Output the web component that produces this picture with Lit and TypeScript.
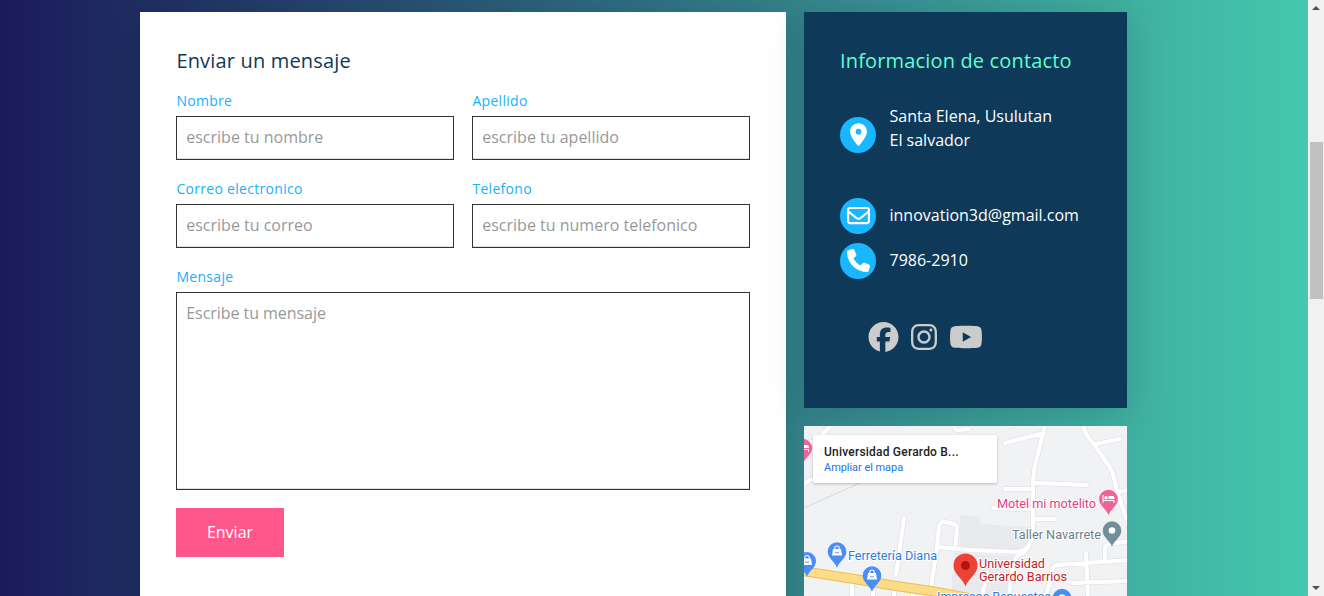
import { LitElement, html, css, svg } from "lit";
import { customElement } from "lit/decorators.js";

const sans = css`"Open Sans", "Noto Sans", sans-serif`;

const FACEBOOK = "M512 256C512 114.600 397.400 0 256 0S0 114.600 0 256C0 376 82.700 476.800 194.200 504.500V334.200H141.400V256h52.800V222.300c0-87.100 39.400-127.500 125-127.500 16.200 0 44.200 3.200 55.700 6.400V172c-6-.6-16.500-1-29.600-1-42 0-58.200 15.900-58.200 57.200V256h83.600l-14.400 78.200H287V510.100C413.800 494.800 512 386.900 512 256z";
const INSTAGRAM = "M224.100 141c-63.600 0-114.900 51.300-114.900 114.900s51.300 114.900 114.900 114.900S339 319.500 339 255.900 287.700 141 224.100 141zm0 189.600c-41.100 0-74.700-33.500-74.700-74.700s33.500-74.700 74.700-74.700 74.700 33.500 74.700 74.700-33.600 74.700-74.700 74.700zm146.400-194.300c0 14.900-12 26.800-26.800 26.800-14.900 0-26.800-12-26.800-26.800s12-26.800 26.800-26.800 26.800 12 26.800 26.800zm76.100 27.200c-1.700-35.900-9.900-67.700-36.200-93.900-26.200-26.200-58-34.400-93.900-36.200-37-2.100-147.900-2.100-184.900 0-35.800 1.700-67.600 9.900-93.900 36.100s-34.400 58-36.200 93.900c-2.100 37-2.100 147.900 0 184.900 1.700 35.900 9.900 67.700 36.200 93.900s58 34.400 93.900 36.200c37 2.100 147.900 2.100 184.900 0 35.900-1.700 67.700-9.900 93.900-36.200 26.200-26.200 34.400-58 36.200-93.900 2.100-37 2.100-147.800 0-184.800zM398.800 388c-7.800 19.600-22.900 34.700-42.600 42.600-29.500 11.700-99.500 9-132.100 9s-102.700 2.600-132.100-9c-19.600-7.800-34.700-22.900-42.600-42.600-11.700-29.500-9-99.500-9-132.100s-2.600-102.700 9-132.100c7.800-19.600 22.900-34.700 42.600-42.600 29.500-11.700 99.500-9 132.100-9s102.700-2.600 132.100 9c19.600 7.800 34.700 22.900 42.600 42.600 11.700 29.500 9 99.500 9 132.100s2.700 102.700-9 132.100z";
const YOUTUBE = "M549.655 124.083c-6.281-23.650-24.787-42.276-48.284-48.597C458.781 64 288 64 288 64S117.220 64 74.629 75.486c-23.497 6.322-42.003 24.947-48.284 48.597-11.412 42.867-11.412 132.305-11.412 132.305s0 89.438 11.412 132.305c6.281 23.650 24.787 41.500 48.284 47.821C117.220 448 288 448 288 448s170.780 0 213.371-11.486c23.497-6.321 42.003-24.171 48.284-47.821 11.412-42.867 11.412-132.305 11.412-132.305s0-89.438-11.412-132.305zm-317.510 213.508V175.185l142.739 81.205-142.739 81.201z";
const PIN = "M215.700 499.200C267 435 384 279.400 384 192C384 86 298 0 192 0S0 86 0 192c0 87.400 117 243 168.300 307.200c12.300 15.300 35.100 15.300 47.400 0zM192 256a64 64 0 1 1 0-128 64 64 0 1 1 0 128z";
const MAIL = "M64 112c-8.800 0-16 7.200-16 16v22.100L220.500 291.700c20.700 17 50.400 17 71.100 0L464 150.100V128c0-8.800-7.200-16-16-16H64zM48 212.200V384c0 8.800 7.200 16 16 16H448c8.800 0 16-7.200 16-16V212.200L322 328.800c-38.400 31.500-93.700 31.500-132 0L48 212.200zM0 128C0 92.700 28.700 64 64 64H448c35.300 0 64 28.700 64 64V384c0 35.300-28.700 64-64 64H64c-35.300 0-64-28.700-64-64V128z";
const PHONE = "M164.900 24.600c-7.700-18.600-28-28.500-47.400-23.200l-88 24C12.100 30.200 0 46 0 64C0 311.400 200.600 512 448 512c18 0 33.800-12.100 38.600-29.500l24-88c5.300-19.400-4.600-39.700-23.200-47.400l-96-40c-16.300-6.800-35.200-2.100-46.300 11.600L304.700 368C234.300 334.700 177.300 277.700 144 207.300L193.300 167c13.700-11.200 18.400-30 11.600-46.300l-40-96z";

@customElement("message-form")
export class MessageForm extends LitElement {
  static styles = css`
    :host { display: block; padding: 36px; font-family: ${sans}; }
    * { box-sizing: border-box; }
    h3 { margin: 0; padding-left: 0.400px; font-size: 20px; line-height: 25px; font-weight: 400; letter-spacing: 0.17px; color: #0e3959; }
    .grid { display: grid; grid-template-columns: 278px 278px; column-gap: 18px; row-gap: 18px; padding-top: 17px; }
    .field { display: flex; flex-direction: column; }
    .wide { grid-column: 1 / 3; }
    label { font-size: 14px; line-height: 19px; letter-spacing: 0.3px; color: #18b0ff; padding: 1px 0 6px 0.400px; }
    input, textarea {
      display: block; width: 100%; border: 1px solid #333; border-radius: 0; outline: 0; resize: none;
      padding: 9px 9px 9px 9.250px; font: 16px/22px ${sans}; color: #333; background: #fff; box-shadow: inset 0 -1px #e0e0e0;
    }
    input { height: 44px; padding-bottom: 11px; }
    textarea { height: 198px; letter-spacing: -0.05px; }
    ::placeholder { color: #999; opacity: 1; }
    button { width: 108px; height: 49px; border: 0; padding: 0 0 2px; background: #ff578b; color: #fff; font: 16px ${sans}; }
  `;
  render() {
    const field = (label: string, hint: string) => html`
      <div class="field"><label>${label}</label><input placeholder=${hint} /></div>`;
    return html`
      <h3>Enviar un mensaje</h3>
      <div class="grid">
        ${field("Nombre", "escribe tu nombre")}
        ${field("Apellido", "escribe tu apellido")}
        ${field("Correo electronico", "escribe tu correo")}
        ${field("Telefono", "escribe tu numero telefonico")}
        <div class="field wide"><label>Mensaje</label><textarea placeholder="Escribe tu mensaje"></textarea></div>
        <div><button>Enviar</button></div>
      </div>`;
  }
}

@customElement("contact-info")
export class ContactInfo extends LitElement {
  static styles = css`
    :host { display: block; box-sizing: border-box; padding: 36px; font-family: ${sans}; color: #fff; }
    h3 { margin: 0; font-size: 20px; line-height: 25px; font-weight: 400; letter-spacing: 0.16px; color: #5fffd0; white-space: nowrap; }
    .row { display: flex; align-items: center; gap: 13.500px; height: 36px; margin-bottom: 9px; font-size: 16px; line-height: 24px; white-space: nowrap; }
    .address { height: 60px; margin: 31px 0 34px; align-items: flex-start; }
    .address .disc { margin-top: 13px; }
    .address .text { padding-top: 0; }
    .disc { width: 36px; height: 36px; flex: none; border-radius: 50%; background: #18b7ff; display: flex; justify-content: center; align-items: center; }
    .disc svg, .social svg { display: block; fill: currentColor; }
    .disc svg { margin-bottom: 2px; }
    .text { padding-bottom: 2px; }
    .social { display: flex; align-items: center; color: #ccc; padding: 34px 0 0 28px; }
    .social svg + svg { margin-left: 12px; }
    .social svg:last-child { margin-left: 13px; }
  `;
  render() {
    return html`
      <h3>Informacion de contacto</h3>
      <div class="row address">
        <span class="disc"><svg width="17" height="23" viewBox="0 0 384 512"><path d=${PIN} /></svg></span>
        <span class="text">Santa Elena, Usulutan<br />El salvador</span>
      </div>
      <div class="row">
        <span class="disc"><svg width="23" height="23" viewBox="0 0 512 512"><path d=${MAIL} /></svg></span>
        <span class="text">innovation3d@gmail.com</span>
      </div>
      <div class="row">
        <span class="disc"><svg width="23" height="23" viewBox="0 0 512 512"><path d=${PHONE} /></svg></span>
        <span class="text">7986-2910</span>
      </div>
      <div class="social">
        <svg width="31" height="30" viewBox="0 0 512 512"><path d=${FACEBOOK} /></svg>
        <svg width="26" height="30" viewBox="0 0 448 512"><path d=${INSTAGRAM} /></svg>
        <svg width="32" height="30" viewBox="14 0 548 512" preserveAspectRatio="none"><path d=${YOUTUBE} /></svg>
      </div>`;
  }
}

@customElement("place-map")
export class PlaceMap extends LitElement {
  static styles = css`
    :host { display: block; position: relative; overflow: hidden; background: #f1f2f4; }
    .canvas { display: block; }
    .canvas text { font-family: Roboto, sans-serif; paint-order: stroke; stroke: #fff; stroke-width: 2px; stroke-linejoin: round; }
    .edge { fill: none; stroke: #e2e4e8; stroke-width: 5.600; stroke-linecap: round; stroke-linejoin: round; }
    .road { fill: none; stroke: #fff; stroke-width: 4; stroke-linecap: round; stroke-linejoin: round; }
    .card {
      position: absolute; left: 9px; top: 9px; width: 184px; height: 48px; box-sizing: border-box; padding: 9px 11px;
      background: #fff; border-radius: 2px; box-shadow: 0 1px 3px rgba(0, 0, 0, 0.25);
      font: 500 12px/16px Roboto, sans-serif; letter-spacing: 0.21px; color: #222; white-space: nowrap;
    }
    .card .link { display: block; font-weight: 400; font-size: 11px; line-height: 15px; letter-spacing: -0.05px; color: #1a73e8; }
  `;
  pin(x: number, y: number, r: number, fill: string, glyph: unknown) {
    const tip = r * 1.75;
    return svg`<g transform="translate(${x} ${y})">
      <path fill=${fill} d="M0 ${tip}C${-r * 0.2} ${r * 1.1} ${-r} ${r * 0.75} ${-r} 0A${r} ${r} 0 0 1 ${r} 0C${r} ${r * 0.75} ${r * 0.2} ${r * 1.1} 0 ${tip}Z" />${glyph}</g>`;
  }
  render() {
    const roads =
      "M-2 21L14 12L28 -1M-2 59L10 52M150 -1Q150 5 156 4L165 3M206 0L213 -3" +
      "M100 92L92 149M127 162L133 121L135 101Q136 95 141 96L150 98Q153 99 153 103L151 122M133 121L165 124L212 126Q222 125 224 120" +
      "M241 -1L233 31Q229 46 229 60V102Q229 112 225 119Q222 126 214 130Q209 134 208 145L205 172" +
      "M240 7L201 17M232 57L283 59M201 63H229M189 82L229 83M251 93H229M178 171L183 146" +
      "M279 -2Q282 11 289 17L305 40Q310 48 312 62L325 101M292 18L316 13M313 66L325 64" +
      "M301 134V122Q301 119 306 118L325 115M325 134L253 139Q248 140 248 147Q248 151 253 152L269 157L325 155M282 127L284 172M248 151L241 172" +
      "M48 156V172M69 166V172M90 163V172M109 166V172";
    const bag = svg`<path fill="#fff" d="M-4 -2.500H4L5 4H-5Z" /><path fill="none" stroke="#fff" stroke-width="1.100" d="M-2.200 -2V-3.500Q-2.200 -5.500 0 -5.500T2.200 -3.500V-2" /><path fill="none" stroke="#4a8df6" stroke-width="0.900" d="M-2 0.500Q0 2.800 2 0.500" />`;
    const bed = svg`<path fill="#fff" d="M-6 -4H-5V1H6V4H5V2H-5V4H-6ZM0 -3H4Q6 -3 6 0H0Z" /><circle cx="-2.500" cy="-1.200" r="1.700" fill="#fff" />`;
    return html`
      <svg class="canvas" width="323" height="170" viewBox="0 0 323 170">
        <path fill="#e8eaed" d="M156 89L176 91V98L229 101V112L214 126L156 122ZM150 127L210 130L204 170H147Z" />
        <path fill="none" stroke="#d5d7d9" d="M0 82L58 56" />
        <path class="edge" d=${roads} /><path class="road" d=${roads} />
        <path fill="none" stroke="#efbd50" stroke-width="10" d="M-2 145L50 153L92 160L127 165L170 173" />
        <path fill="none" stroke="#fddc88" stroke-width="8" d="M-2 145L50 153L92 160L127 165L170 173" />
        ${this.pin(-1, 22, 9, "#f0639a", bed)}
        ${this.pin(3, 135, 9, "#4a8df6", bag)}
        ${this.pin(33, 125.500, 9.300, "#4a8df6", bag)}
        ${this.pin(68, 149.500, 9.300, "#4a8df6", bag)}
        ${this.pin(304.500, 73, 9.300, "#f0639a", bed)}
        ${this.pin(308, 104.500, 9.300, "#738e9b", svg`<circle r="3.300" fill="#fff" />`)}
        ${this.pin(258, 172, 9.300, "#4a8df6", svg`<circle r="3" fill="none" stroke="#fff" stroke-width="1.500" />`)}
        ${this.pin(161.500, 139.500, 12, "#ea4335", svg`<circle r="4.500" fill="#b31412" />`)}
        <g font-size="13">
          <text x="44" y="134" fill="#2d7de1" textLength="89" lengthAdjust="spacingAndGlyphs">Ferretería Diana</text>
          <text x="193" y="82" fill="#ea3a82" textLength="99" lengthAdjust="spacingAndGlyphs">Motel mi motelito</text>
          <text x="208" y="113" fill="#6b808c" textLength="89" lengthAdjust="spacingAndGlyphs">Taller Navarrete</text>
          <text x="175" y="142" fill="#c5221f" textLength="66" lengthAdjust="spacingAndGlyphs">Universidad</text>
          <text x="175" y="155" fill="#c5221f" textLength="88" lengthAdjust="spacingAndGlyphs">Gerardo Barrios</text>
          <text x="133" y="175" fill="#2d7de1" textLength="114" lengthAdjust="spacingAndGlyphs">Impresos Repuestos</text>
        </g>
      </svg>
      <div class="card">Universidad Gerardo B...<span class="link">Ampliar el mapa</span></div>`;
  }
}

@customElement("app-root")
export class AppRoot extends LitElement {
  static styles = css`
    :host { display: flex; width: 1324px; height: 596px; overflow: hidden; }
    * { box-sizing: border-box; }
    .page { flex: 1; display: flex; gap: 18px; padding: 12px 0 0 140px; overflow: hidden; background: linear-gradient(90deg, #1b1b5a, #45c8ad); }
    message-form, contact-info { box-shadow: 0 5px 35px rgba(0, 0, 0, 0.15); }
    message-form { width: 646px; height: 650px; background: #fff; flex: none; }
    .side { width: 323px; display: flex; flex-direction: column; gap: 18px; flex: none; }
    contact-info { height: 396px; background: #0e3959; flex: none; }
    place-map { height: 200px; flex: none; }
    .bar { width: 16px; flex: none; background: #f1f1f1; display: flex; flex-direction: column; align-items: center; justify-content: space-between; padding: 6px 0; }
    .thumb { width: 13px; height: 157px; background: #c1c1c1; margin: 132px 0 auto 1px; }
    .bar svg { display: block; }
  `;
  render() {
    return html`
      <div class="page">
        <message-form></message-form>
        <div class="side"><contact-info></contact-info><place-map></place-map></div>
      </div>
      <div class="bar">
        <svg width="8" height="4" viewBox="0 0 8 4"><path d="M0 4L4 0L8 4Z" fill="#505050" /></svg>
        <div class="thumb"></div>
        <svg width="8" height="4" viewBox="0 0 8 4"><path d="M0 0L4 4L8 0Z" fill="#505050" /></svg>
      </div>`;
  }
}
